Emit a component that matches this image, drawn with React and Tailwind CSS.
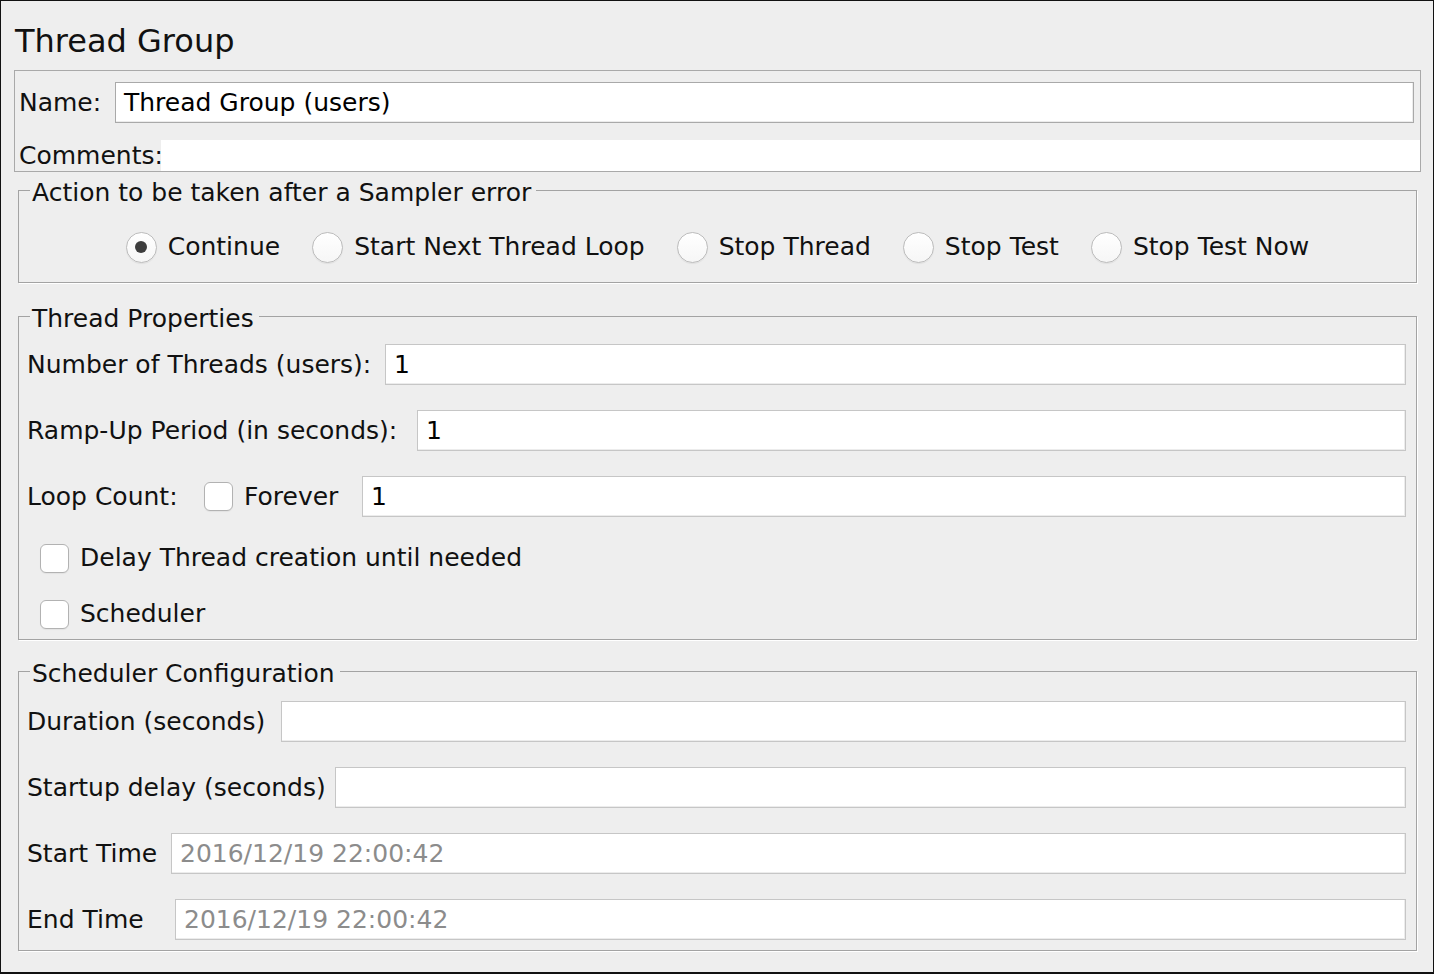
import React from 'react';

// JMeter-style "Thread Group" editor panel

const Field = ({ value = '', muted = false, dark = false }) => (
  <div
    className={`flex-1 h-[41px] bg-white flex items-center pl-[8px] border ${
      dark ? 'border-[#a9a9a9]' : 'border-[#c6c6c6]'
    } shadow-[inset_-1px_-1px_0_#ececec] ${muted ? 'text-[#8c8c8c]' : 'text-black'}`}
  >
    {value}
  </div>
);

const Radio = ({ checked, label }) => (
  <label className="flex items-center gap-[11px] whitespace-nowrap">
    <span className="w-[31px] h-[31px] rounded-full border border-[#bcbcbc] bg-gradient-to-b from-white to-[#f6f6f6] flex items-center justify-center shadow-[0_1px_1px_rgba(0,0,0,0.06)]">
      {checked && <span className="w-[12px] h-[12px] rounded-full bg-[#3d3d3d]" />}
    </span>
    <span>{label}</span>
  </label>
);

const Checkbox = ({ label, className = '' }) => (
  <label className={`flex items-center gap-[11px] whitespace-nowrap ${className}`}>
    <span className="w-[29px] h-[29px] rounded-[6px] border border-[#b2b2b2] bg-white shadow-[0_1px_1px_rgba(0,0,0,0.05)]" />
    <span>{label}</span>
  </label>
);

const Group = ({ title, className = '', children }) => (
  <fieldset
    className={`ml-[17px] w-[1399px] border border-[#a3a3a3] shadow-[1px_1px_0_#ffffff] ${className}`}
  >
    <legend className="ml-[11px] pl-[2px] pr-[5px] pt-[6px] leading-[30px]">{title}</legend>
    {children}
  </fieldset>
);

// labelW fixes where the text field starts, as the Swing layout does
const Row = ({ label, labelW, children, className = '' }) => (
  <div className={`flex items-center h-[41px] ${className}`}>
    <span className={`whitespace-nowrap shrink-0 ${labelW}`}>{label}</span>
    {children}
  </div>
);

export default function App() {
  return (
    <div className="w-[1434px] h-[974px] box-border border border-b-2 border-[#111111] bg-[#eeeeee] text-[#111111] text-[25px] font-['DejaVu_Sans',sans-serif] overflow-hidden">
      {/* TITLE */}
      <div className="h-[69px] pl-[14px] pt-[21px] leading-[38px] text-[32px]">Thread Group</div>

      {/* NAME / COMMENTS */}
      <div className="ml-[13px] w-[1407px] border border-[#a9a9a9] pt-[11px]">
        <div className="flex items-center h-[41px] pr-[6px]">
          <span className="w-[100px] pl-[4px] shrink-0">Name:</span>
          <Field value="Thread Group (users)" dark />
        </div>
        <div className="flex items-end h-[31px] mt-[17px]">
          <span className="w-[146px] pl-[4px] shrink-0 leading-[30px]">Comments:</span>
          <div className="flex-1 h-[31px] bg-white" />
        </div>
      </div>

      {/* SAMPLER ERROR ACTION */}
      <Group title="Action to be taken after a Sampler error">
        <div className="flex items-center justify-center gap-[32px] h-[40px] mt-[19px] mb-[15px]">
          <Radio checked label="Continue" />
          <Radio label="Start Next Thread Loop" />
          <Radio label="Stop Thread" />
          <Radio label="Stop Test" />
          <Radio label="Stop Test Now" />
        </div>
      </Group>

      {/* THREAD PROPERTIES */}
      <Group title="Thread Properties" className="mt-[15px]">
        <div className="flex flex-col pl-[8px] pr-[10px] pt-[10px] pb-[5px]">
          <Row label="Number of Threads (users):" labelW="w-[358px]">
            <Field value="1" />
          </Row>
          <Row label="Ramp-Up Period (in seconds):" labelW="w-[390px]" className="mt-[25px]">
            <Field value="1" />
          </Row>
          <div className="flex items-center h-[41px] mt-[25px]">
            <span className="whitespace-nowrap w-[177px] shrink-0">Loop Count:</span>
            <Checkbox label="Forever" className="w-[158px] shrink-0" />
            <Field value="1" />
          </div>
          <div className="flex items-center h-[40px] mt-[21px] pl-[13px]">
            <Checkbox label="Delay Thread creation until needed" />
          </div>
          <div className="flex items-center h-[40px] mt-[16px] pl-[13px]">
            <Checkbox label="Scheduler" />
          </div>
        </div>
      </Group>

      {/* SCHEDULER CONFIGURATION */}
      <Group title="Scheduler Configuration" className="mt-[13px]">
        <div className="flex flex-col pl-[8px] pr-[10px] pt-[12px] pb-[10px]">
          <Row label="Duration (seconds)" labelW="w-[254px]">
            <Field />
          </Row>
          <Row label="Startup delay (seconds)" labelW="w-[308px]" className="mt-[25px]">
            <Field />
          </Row>
          <Row label="Start Time" labelW="w-[144px]" className="mt-[25px]">
            <Field value="2016/12/19 22:00:42" muted />
          </Row>
          <Row label="End Time" labelW="w-[148px]" className="mt-[25px]">
            <Field value="2016/12/19 22:00:42" muted />
          </Row>
        </div>
      </Group>
    </div>
  );
}
